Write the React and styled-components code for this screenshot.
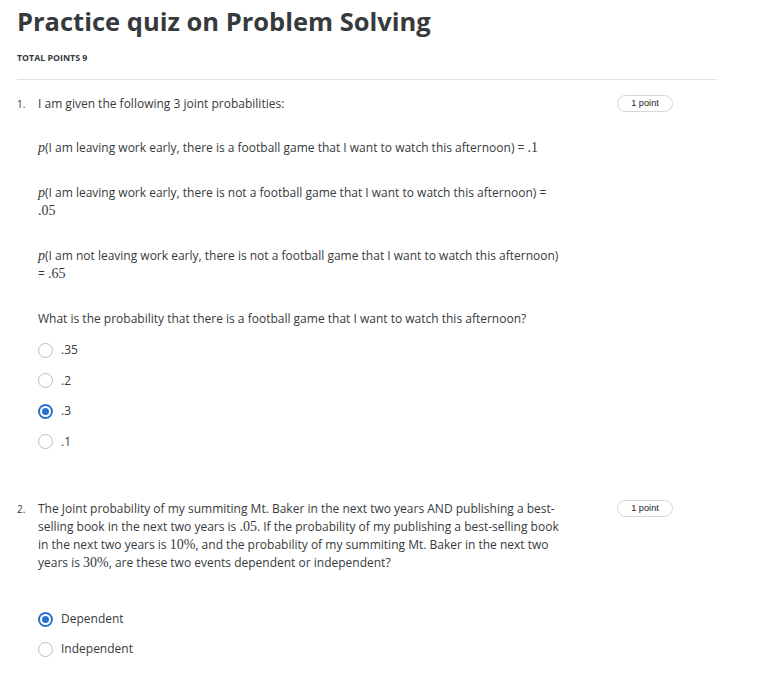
import React from "react";
import styled, { createGlobalStyle } from "styled-components";

const Global = createGlobalStyle`
  html, body { margin: 0; padding: 0; background: #fff; }
  body { font-family: "Open Sans", "Liberation Sans", sans-serif; color: #373a3c; }
`;

const Page = styled.div`
  padding: 0 17px;
  width: 700px;
`;

const Title = styled.h1`
  margin: 0;
  padding-top: 3px;
  font-size: 25.5px;
  line-height: 36px;
  font-weight: 700;
  color: #373a3c;
`;

const TotalPoints = styled.div`
  margin-top: 13px;
  font-size: 8.8px;
  line-height: 12px;
  font-weight: 700;
  text-transform: uppercase;
  color: #373a3c;
  padding-bottom: 15px;
  border-bottom: 1px solid #e1e1e1;
`;

const List = styled.ol`
  list-style: none;
  margin: 0;
  padding: 0;
`;

const Question = styled.li`
  display: flex;
  align-items: flex-start;
  width: 656px;
  margin-top: ${(p) => p.$top}px;
`;

const Num = styled.div`
  flex: 0 0 21px;
  font-size: 10px;
  line-height: 18px;
  color: #373a3c;
`;

const Body = styled.div`
  flex: 0 0 525px;
  font-size: 12px;
  line-height: 18px;
  color: #373a3c;
`;

const Para = styled.p`
  margin: 0 0 ${(p) => p.$gap ?? 27}px;
`;

const Math = styled.span`
  font-family: "Liberation Serif", "DejaVu Serif", serif;
  font-size: 14px;
  line-height: 0;
  font-style: ${(p) => (p.$italic ? "italic" : "normal")};
`;

const Pill = styled.div`
  margin-left: auto;
  width: 54px;
  height: 15px;
  border: 1px solid #d6d6d6;
  border-radius: 9px;
  font-family: "Liberation Sans", Arial, sans-serif;
  font-size: 9.2px;
  line-height: 15px;
  text-align: center;
  color: #222;
`;

const Options = styled.div`
  display: flex;
  flex-direction: column;
`;

const Option = styled.label`
  display: flex;
  align-items: center;
  height: ${(p) => p.$h || 30.5}px;
  gap: 8px;
  font-size: 12px;
`;

const Radio = styled.span`
  box-sizing: border-box;
  width: 15px;
  height: 15px;
  border-radius: 50%;
  border: ${(p) => (p.$checked ? "2px solid #2a73cc" : "1px solid #bdbdbd")};
  display: flex;
  align-items: center;
  justify-content: center;
  &::after {
    content: "";
    display: ${(p) => (p.$checked ? "block" : "none")};
    width: 7px;
    height: 7px;
    border-radius: 50%;
    background: #2a73cc;
  }
`;

const P = () => <Math $italic>p</Math>;

export default function App() {
  return (
    <>
      <Global />
      <Page>
        <Title>Practice quiz on Problem Solving</Title>
        <TotalPoints>Total points 9</TotalPoints>
        <List>
          <Question $top={15}>
            <Num>1.</Num>
            <Body>
              <Para $gap={26}>I am given the following 3 joint probabilities:</Para>
              <Para>
                <P />(I am leaving work early, there is a football game that I want to watch this afternoon) = <Math>.1</Math>
              </Para>
              <Para>
                <P />(I am leaving work early, there is not a football game that I want to watch this afternoon) = <Math>.05</Math>
              </Para>
              <Para>
                <P />(I am not leaving work early, there is not a football game that I want to watch this afternoon) = <Math>.65</Math>
              </Para>
              <Para $gap={7}>What is the probability that there is a football game that I want to watch this afternoon?</Para>
              <Options>
                {[".35", ".2", ".3", ".1"].map((o) => (
                  <Option key={o}>
                    <Radio $checked={o === ".3"} />
                    {o}
                  </Option>
                ))}
              </Options>
            </Body>
            <Pill>1 point</Pill>
          </Question>
          <Question $top={43}>
            <Num>2.</Num>
            <Body>
              <Para $gap={32}>
                The Joint probability of my summiting Mt. Baker in the next two years AND publishing a best-selling book in the next two years is <Math>.05</Math>. If the probability of my publishing a best-selling book in the next two years is <Math>10%</Math>, and the probability of my summiting Mt. Baker in the next two years is <Math>30%</Math>, are these two events dependent or independent?
              </Para>
              <Options>
                {["Dependent", "Independent"].map((o) => (
                  <Option key={o} $h={30}>
                    <Radio $checked={o === "Dependent"} />
                    {o}
                  </Option>
                ))}
              </Options>
            </Body>
            <Pill>1 point</Pill>
          </Question>
        </List>
      </Page>
    </>
  );
}
